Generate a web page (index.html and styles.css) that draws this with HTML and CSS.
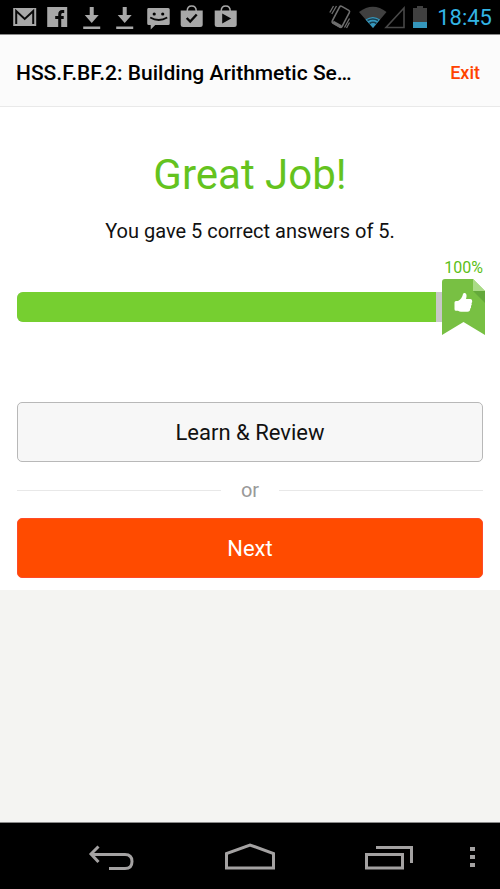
FILE: index.html
```html
<!DOCTYPE html>
<html lang="en">
<head>
<meta charset="utf-8">
<meta name="viewport" content="width=device-width, initial-scale=1">
<title>HSS.F.BF.2: Building Arithmetic Sequences</title>
<link rel="stylesheet" href="styles.css">
</head>
<body>
<div class="status">
  <div class="notices">
    <svg viewBox="0 0 33 34" aria-hidden="true"><path fill="#a8a8a8" d="M5 8h23v18H5z"/><path fill="none" stroke="#080808" stroke-width="2" d="M8 24V11l8.500 8L25 11v13"/></svg>
    <svg viewBox="0 0 33 34" aria-hidden="true"><path fill="#a8a8a8" d="M6 7h20v20H6z"/><path fill="none" stroke="#080808" stroke-width="3" d="M23 11.500h-2q-2.500 0-2.500 3V27M14 17.500h8.500"/></svg>
    <svg viewBox="0 0 33 34" aria-hidden="true"><path fill="#a8a8a8" d="M14.500 7h4v8h5l-7 8-7-8h5zM8 26.500h17v2.500H8z"/></svg>
    <svg viewBox="0 0 33 34" aria-hidden="true"><path fill="#a8a8a8" d="M14.500 7h4v8h5l-7 8-7-8h5zM8 26.500h17v2.500H8z"/></svg>
    <svg viewBox="0 0 33 34" aria-hidden="true"><path fill="#a8a8a8" d="M6 8h20q1.500 0 1.500 1.500v14q0 1.500-1.500 1.500H13l-4.500 4.500V25H6.500Q5 25 5 23.500v-14Q5 8 6 8z"/><circle cx="12" cy="14" r="1.600"/><circle cx="20.500" cy="14" r="1.600"/><path fill="none" stroke="#080808" stroke-width="1.800" d="M8 17.500q8.500 5 17 0"/></svg>
    <svg viewBox="0 0 33 34" aria-hidden="true"><path fill="#a8a8a8" d="M5.500 10.500h22v14q0 2.500-2.500 2.500H8q-2.500 0-2.500-2.500z"/><path fill="none" stroke="#a8a8a8" stroke-width="1.500" d="M12 11q0-5 4.500-5t4.500 5"/><path fill="none" stroke="#080808" stroke-width="2.400" d="M11.500 18l3.500 3.500 6.500-7"/></svg>
    <svg viewBox="0 0 33 34" aria-hidden="true"><path fill="#a8a8a8" d="M5.500 10.500h22v14q0 2.500-2.500 2.500H8q-2.500 0-2.500-2.500z"/><path fill="none" stroke="#a8a8a8" stroke-width="1.500" d="M12 11q0-5 4.500-5t4.500 5"/><path fill="#080808" d="M13 13.500l9 5-9 5z"/></svg>
  </div>
  <div class="system">
    <svg width="100" height="34" viewBox="0 0 100 34" aria-hidden="true">
      <g fill="none" stroke="#6e6e6e">
        <path stroke-width="1.600" d="M10.500 7.200q.8-1.500 2.300-.8l7 4q1.300.9.500 2.200L13 26.500q-.8 1.300-2.200.6l-7-4q-1.200-.8-.5-2.200z"/>
        <path stroke-width="3" d="M4 22l8 4.600"/>
        <path stroke-width="1.300" d="M7.500 6l-4.700 8M4.500 6L.8 12.500M20.500 18.500l-5 9M20.500 22.500l-3 5.500"/>
      </g>
      <path fill="#404040" d="M44 28L30 12q14-10.500 27.500 0z"/>
      <path fill="#3597bd" d="M44 28l-7.500-8.500q7.500-5 14.500 0z"/>
      <path fill="none" stroke="#183e4e" stroke-width="1.600" d="M38.500 20.500q5.500-3 10.500 0M40.500 23.500q3.500-2.500 7 0"/>
      <path fill="none" stroke="#484848" stroke-width="1.600" d="M57 27.500h18V8z"/>
      <path fill="#404040" d="M84 8h4V6h6v2h4v14H84z"/>
      <path fill="#3597bd" d="M84 22h14v6H84z"/>
    </svg>
    <time class="clock">18:45</time>
  </div>
</div>
<header class="bar">
  <h1 class="title">HSS.F.BF.2: Building Arithmetic Se…</h1>
  <a class="exit" href="#">Exit</a>
</header>
<main class="result">
  <h2 class="praise">Great Job!</h2>
  <p class="summary">You gave 5 correct answers of 5.</p>
  <div class="score">
    <div class="percent">100%</div>
    <div class="track" role="progressbar" aria-label="Score" aria-valuenow="100" aria-valuemin="0" aria-valuemax="100"><div class="fill"></div></div>
    <svg class="ribbon" width="43" height="56" viewBox="0 0 43 56" aria-hidden="true">
      <path fill="#78c043" d="M3 0h28l12 12v44L21.500 43 0 56V3q0-3 3-3z"/>
      <path fill="#64a93b" d="M31 12h12v12z"/>
      <path fill="#aadb86" d="M31 0l12 12H31z"/>
      <path fill="#fff" d="M12.500 23.500q0-1.500 1.500-1.500h2q4-2 5-7 .5-1.500 2-1 2.500 1 1 6h4.500q2 .3 1.700 2.500 0 1-.7 1.500.8 1.700-.5 3 .5 1.700-.8 2.700 0 3-2.700 3H19q-1.500 0-3-1h-2q-1.500 0-1.500-1.500z"/>
    </svg>
  </div>
  <button class="btn review" type="button">Learn &amp; Review</button>
  <div class="or">or</div>
  <button class="btn next" type="button">Next</button>
</main>
<nav class="keys" aria-label="System navigation">
  <button class="key" type="button" aria-label="Back"><svg width="48" height="38" viewBox="0 -4 48 38"><path fill="none" stroke="#a4a2a2" stroke-width="3" d="M11.500 4.500L4 12l7.500 8M4 12.500h34q7 0 7 7t-7 7H22"/></svg></button>
  <button class="key" type="button" aria-label="Home"><svg width="50" height="38" viewBox="0 -4 50 38"><path fill="none" stroke="#a4a2a2" stroke-width="3" d="M1.500 26V11.500L25 3l23.500 8.500V26z"/></svg></button>
  <button class="key" type="button" aria-label="Recent apps"><svg width="48" height="38" viewBox="0 -4 48 38"><path fill="none" stroke="#a4a2a2" stroke-width="3" d="M1.500 12.500h36V26h-36zM11 5.500h35.500V21"/></svg></button>
  <button class="more" type="button" aria-label="More options"><svg width="5" height="20" viewBox="0 0 5 20"><path fill="#a4a2a2" d="M0 0h5v4H0zM0 8h5v4H0zM0 16h5v4H0z"/></svg></button>
</nav>
</body>
</html>
```
FILE: styles.css
```css
* {
  box-sizing: border-box;
}

body {
  margin: 0;
  min-height: 100vh;
  display: flex;
  flex-direction: column;
  background: #f4f4f2;
  color: #111;
  font-family: Roboto, "Liberation Sans", sans-serif;
}

button {
  font: inherit;
  border: 0;
  padding: 0;
  background: none;
  cursor: pointer;
}

svg {
  display: block;
}

.status {
  display: flex;
  justify-content: space-between;
  height: 34px;
  padding: 0 8px;
  background: #000;
}

.notices {
  display: grid;
  grid-template-columns: repeat(7, 1fr);
  width: 234px;
}

.notices svg {
  width: 100%;
  height: 34px;
}

.system {
  display: flex;
  align-items: flex-start;
  gap: 8px;
}

.clock {
  color: #33b5e5;
  font-size: 22px;
  line-height: 36px;
}

.bar {
  display: flex;
  align-items: center;
  justify-content: space-between;
  height: 73px;
  padding: 4px 20px 0 16px;
  background: #fbfbfb;
  border-top: 1px solid #8a8a8a;
  border-bottom: 1px solid #e9e9e9;
}

.title {
  margin: 0;
  color: #000;
  font-size: 21px;
  font-weight: 500;
}

.exit {
  color: #ff4200;
  font-size: 18px;
  font-weight: 500;
  text-decoration: none;
}

.result {
  padding: 44px 17px 12px;
  background: #fff;
  text-align: center;
}

.praise {
  margin: 0;
  color: #64c31e;
  font-size: 42px;
  font-weight: 400;
  line-height: 48px;
}

.summary {
  margin: 20px 0 16px;
  font-size: 20px;
  line-height: 24px;
}

.score {
  position: relative;
  margin-bottom: 80px;
}

.percent {
  margin-bottom: 15px;
  color: #5cbf18;
  font-size: 16px;
  line-height: 18px;
  text-align: right;
}

.track {
  height: 30px;
  border-radius: 6px;
  background: #c8c8c8;
  overflow: hidden;
}

.fill {
  width: 90%;
  height: 100%;
  background: #76cf30;
}

.ribbon {
  position: absolute;
  top: 20px;
  right: -2px;
}

.btn {
  display: block;
  width: 100%;
  height: 60px;
  border-radius: 5px;
  font-size: 22px;
}

.review {
  color: #111;
  background: #f7f7f7;
  border: 1px solid #b8b8b8;
}

.or {
  display: flex;
  align-items: center;
  gap: 20px;
  height: 56px;
  color: #999;
  font-size: 20px;
}

.or::before,
.or::after {
  content: "";
  flex: 1;
  height: 1px;
  background: #e8e8e8;
}

.next {
  color: #fff;
  background: #ff4b00;
  border: 1px solid #ff4a28;
}

.keys {
  display: grid;
  grid-template-columns: 41px 1fr 1fr 1fr 41px;
  align-items: center;
  height: 67px;
  margin-top: auto;
  padding-top: 2px;
  background: #000;
  border-top: 1px solid #8a8a8a;
}

.key {
  justify-self: center;
}

.key:first-child {
  grid-column: 2;
}

.more {
  display: grid;
  place-items: center;
  width: 27px;
}
```
